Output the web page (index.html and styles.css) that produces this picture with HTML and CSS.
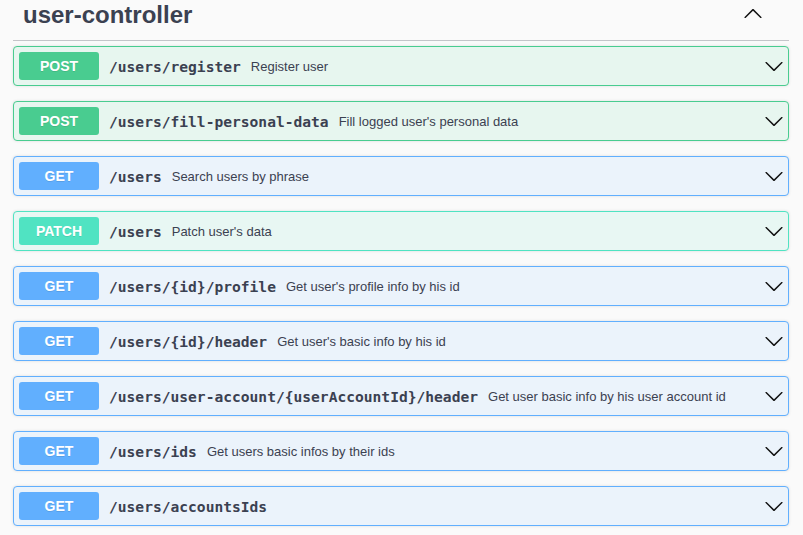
FILE: index.html
```html
<!DOCTYPE html>
<html>
<head>
<meta charset="utf-8">
<link rel="stylesheet" href="styles.css">
</head>
<body>
<div class="tag-section">
  <h3 class="tag-header">
    <span class="tag-name">user-controller</span>
    <svg class="tag-arrow" width="20" height="20" viewBox="0 0 20 20"><path d="M17.418 6.109c.272-.268.709-.268.979 0s.271.701 0 .969l-7.908 7.83c-.27.268-.707.268-.979 0l-7.908-7.83c-.27-.268-.27-.701 0-.969.271-.268.709-.268.979 0L10 13.25l7.418-7.141z"/></svg>
  </h3>
  <div class="ops">
    <div class="op op-post"><span class="method">POST</span><span class="path">/users/register</span><span class="desc">Register user</span><svg class="arrow" width="20" height="20" viewBox="0 0 20 20"><path d="M17.418 6.109c.272-.268.709-.268.979 0s.271.701 0 .969l-7.908 7.83c-.27.268-.707.268-.979 0l-7.908-7.83c-.27-.268-.27-.701 0-.969.271-.268.709-.268.979 0L10 13.25l7.418-7.141z"/></svg></div>
    <div class="op op-post"><span class="method">POST</span><span class="path">/users/fill-personal-data</span><span class="desc">Fill logged user's personal data</span><svg class="arrow" width="20" height="20" viewBox="0 0 20 20"><path d="M17.418 6.109c.272-.268.709-.268.979 0s.271.701 0 .969l-7.908 7.83c-.27.268-.707.268-.979 0l-7.908-7.83c-.27-.268-.27-.701 0-.969.271-.268.709-.268.979 0L10 13.25l7.418-7.141z"/></svg></div>
    <div class="op op-get"><span class="method">GET</span><span class="path">/users</span><span class="desc">Search users by phrase</span><svg class="arrow" width="20" height="20" viewBox="0 0 20 20"><path d="M17.418 6.109c.272-.268.709-.268.979 0s.271.701 0 .969l-7.908 7.83c-.27.268-.707.268-.979 0l-7.908-7.83c-.27-.268-.27-.701 0-.969.271-.268.709-.268.979 0L10 13.25l7.418-7.141z"/></svg></div>
    <div class="op op-patch"><span class="method">PATCH</span><span class="path">/users</span><span class="desc">Patch user's data</span><svg class="arrow" width="20" height="20" viewBox="0 0 20 20"><path d="M17.418 6.109c.272-.268.709-.268.979 0s.271.701 0 .969l-7.908 7.83c-.27.268-.707.268-.979 0l-7.908-7.83c-.27-.268-.27-.701 0-.969.271-.268.709-.268.979 0L10 13.25l7.418-7.141z"/></svg></div>
    <div class="op op-get"><span class="method">GET</span><span class="path">/users/{id}/profile</span><span class="desc">Get user's profile info by his id</span><svg class="arrow" width="20" height="20" viewBox="0 0 20 20"><path d="M17.418 6.109c.272-.268.709-.268.979 0s.271.701 0 .969l-7.908 7.83c-.27.268-.707.268-.979 0l-7.908-7.83c-.27-.268-.27-.701 0-.969.271-.268.709-.268.979 0L10 13.25l7.418-7.141z"/></svg></div>
    <div class="op op-get"><span class="method">GET</span><span class="path">/users/{id}/header</span><span class="desc">Get user's basic info by his id</span><svg class="arrow" width="20" height="20" viewBox="0 0 20 20"><path d="M17.418 6.109c.272-.268.709-.268.979 0s.271.701 0 .969l-7.908 7.83c-.27.268-.707.268-.979 0l-7.908-7.83c-.27-.268-.27-.701 0-.969.271-.268.709-.268.979 0L10 13.25l7.418-7.141z"/></svg></div>
    <div class="op op-get"><span class="method">GET</span><span class="path">/users/user-account/{userAccountId}/header</span><span class="desc">Get user basic info by his user account id</span><svg class="arrow" width="20" height="20" viewBox="0 0 20 20"><path d="M17.418 6.109c.272-.268.709-.268.979 0s.271.701 0 .969l-7.908 7.83c-.27.268-.707.268-.979 0l-7.908-7.83c-.27-.268-.27-.701 0-.969.271-.268.709-.268.979 0L10 13.25l7.418-7.141z"/></svg></div>
    <div class="op op-get"><span class="method">GET</span><span class="path">/users/ids</span><span class="desc">Get users basic infos by their ids</span><svg class="arrow" width="20" height="20" viewBox="0 0 20 20"><path d="M17.418 6.109c.272-.268.709-.268.979 0s.271.701 0 .969l-7.908 7.83c-.27.268-.707.268-.979 0l-7.908-7.83c-.27-.268-.27-.701 0-.969.271-.268.709-.268.979 0L10 13.25l7.418-7.141z"/></svg></div>
    <div class="op op-get"><span class="method">GET</span><span class="path">/users/accountsIds</span><svg class="arrow" width="20" height="20" viewBox="0 0 20 20"><path d="M17.418 6.109c.272-.268.709-.268.979 0s.271.701 0 .969l-7.908 7.83c-.27.268-.707.268-.979 0l-7.908-7.83c-.27-.268-.27-.701 0-.969.271-.268.709-.268.979 0L10 13.25l7.418-7.141z"/></svg></div>
  </div>
</div>
</body>
</html>
```

FILE: styles.css
```css
html, body {
  margin: 0;
  padding: 0;
  background: #fafafa;
}
body {
  font-family: "Liberation Sans", Arial, sans-serif;
  color: #3b4151;
}
.tag-section {
  width: 776px;
  margin-left: 13px;
}
.tag-header {
  margin: 0;
  height: 41px;
  box-sizing: border-box;
  border-bottom: 1px solid #c4c5c9;
  display: flex;
  align-items: flex-start;
  padding-left: 10px;
}
.tag-name {
  font-size: 24px;
  font-weight: bold;
  line-height: 30px;
  color: #3b4151;
}
.tag-arrow {
  margin-left: auto;
  margin-right: 26px;
  margin-top: 4px;
  transform: rotate(180deg);
  fill: #111;
}
.ops {
  padding-top: 5px;
}
.op {
  box-sizing: border-box;
  height: 40px;
  border: 1px solid;
  border-radius: 4px;
  margin-bottom: 15px;
  padding: 5px 4px 5px 5px;
  display: flex;
  align-items: center;
  box-shadow: 0 0 3px rgba(0,0,0,.12);
}
.method {
  width: 80px;
  height: 28px;
  border-radius: 3px;
  color: #fff;
  font-size: 14px;
  font-weight: bold;
  display: flex;
  align-items: center;
  justify-content: center;
  text-shadow: 0 1px 0 rgba(0,0,0,.1);
  flex-shrink: 0;
}
.path {
  margin-left: 10px;
  font-family: "DejaVu Sans Mono", monospace;
  font-weight: bold;
  font-size: 14.6px;
  color: #3b4151;
  padding-top: 1px;
}
.desc {
  margin-left: 10px;
  font-size: 13px;
  color: #3b4151;
}
.arrow {
  margin-left: auto;
  fill: #111;
  flex-shrink: 0;
}
.op-post {
  background: #e7f6ef;
  border-color: #49cc90;
}
.op-post .method { background: #49cc90; }
.op-get {
  background: #ebf3fb;
  border-color: #61affe;
}
.op-get .method { background: #61affe; }
.op-patch {
  background: #e8f7f3;
  border-color: #50e3c2;
}
.op-patch .method { background: #50e3c2; }
```
